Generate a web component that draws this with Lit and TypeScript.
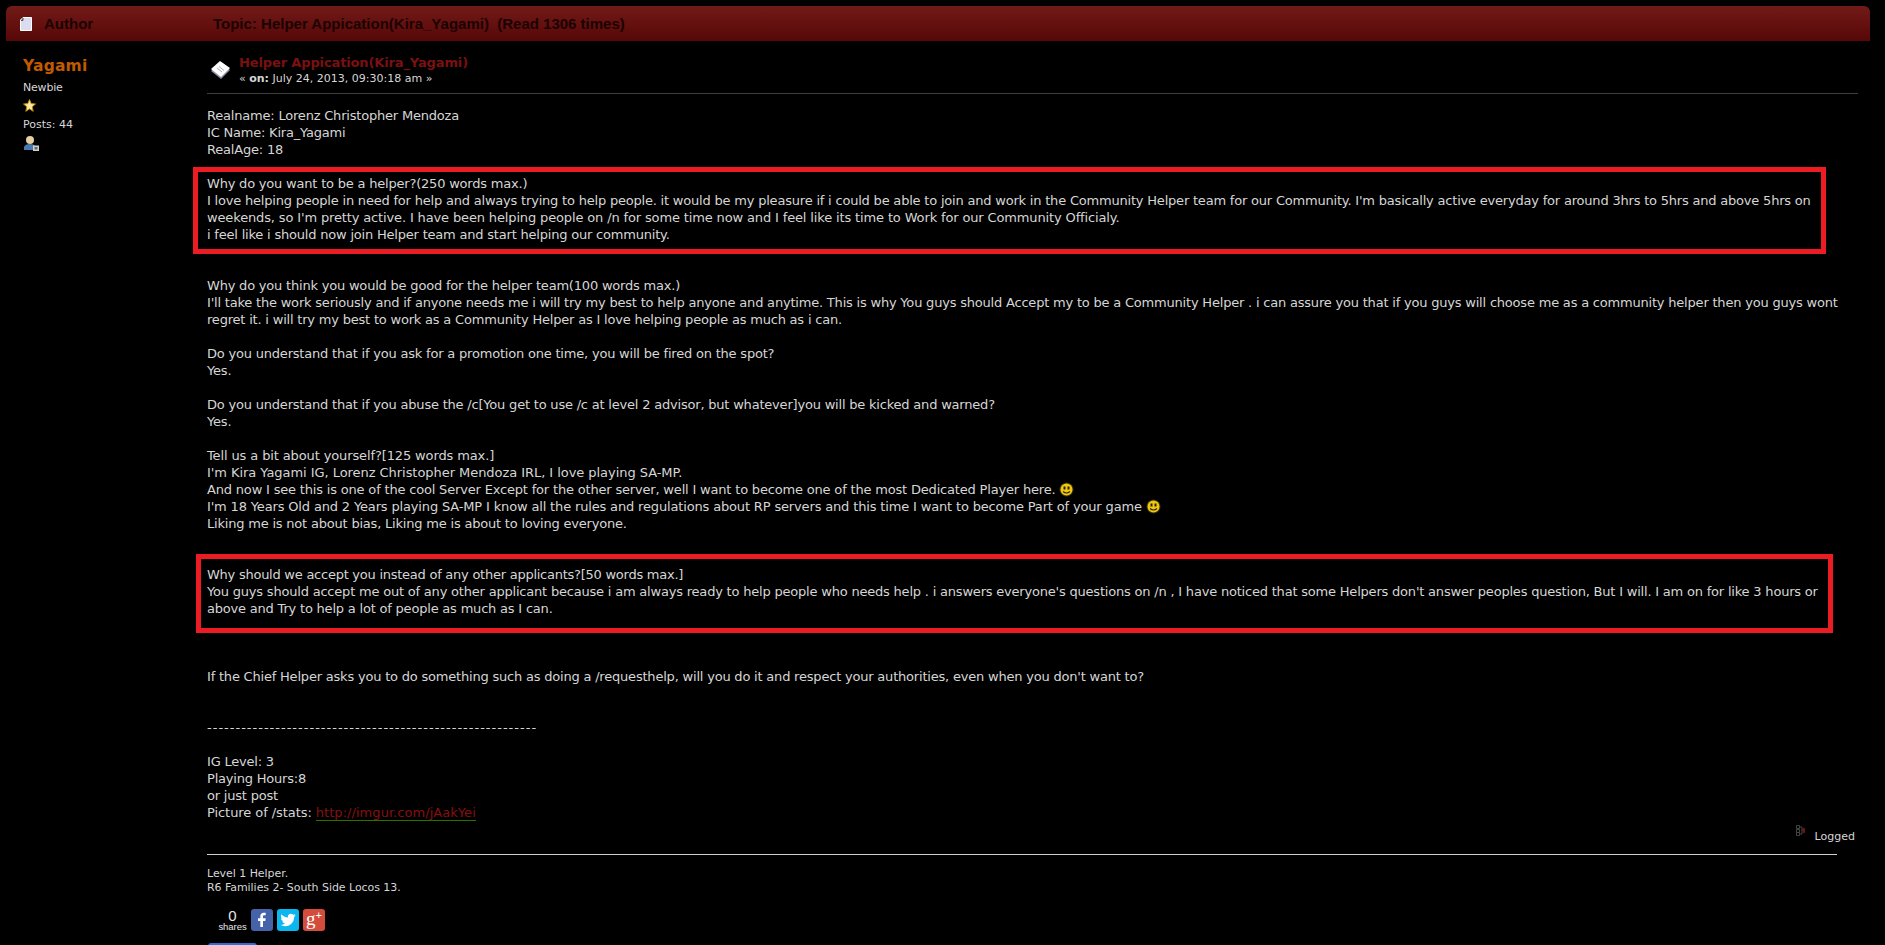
import { LitElement, html, css } from "lit";
import { customElement } from "lit/decorators.js";

const smiley = html`<svg class="smiley" width="15" height="15" viewBox="0 0 15 15">
  <circle cx="7.5" cy="7.5" r="7" fill="#3a3208"/>
  <circle cx="7.5" cy="7.5" r="6" fill="#f3c80c"/>
  <rect x="4.5" y="4.500" width="2" height="3" fill="#222"/>
  <rect x="8.500" y="4.500" width="2" height="3" fill="#222"/>
  <path d="M4 9.500 Q7.500 12.500 11 9.500" stroke="#222" stroke-width="1.100" fill="none"/>
</svg>`;

@customElement("app-root")
export class AppRoot extends LitElement {
  static styles = css`
    :host {
      display: block;
      height: 945px;
      overflow: hidden;
      position: relative;
      background: #000;
      color: #d6d6d6;
      font-family: "DejaVu Sans", Verdana, sans-serif;
      font-size: 13px;
    }
    .bar {
      margin: 6px 15px 0 6px;
      height: 35px;
      border-radius: 6px 6px 0 0;
      background: linear-gradient(#721b18, #570707);
      display: flex;
      align-items: center;
      color: #1c0303;
      font: bold 15px "Liberation Sans", Arial, sans-serif;
      box-sizing: border-box;
    }
    .bar svg { margin-left: 14px; flex: none; }
    .author { margin-left: 12px; width: 169px; }
    .post { display: flex; padding-left: 23px; }
    .poster {
      width: 184px;
      flex: none;
      padding-top: 15px;
      font-size: 11px;
      line-height: 14px;
    }
    .name { color: #c25a00; font-size: 15.5px; font-weight: bold; line-height: 20px; margin-bottom: 4px; letter-spacing: 0.2px; }
    .poster .row { height: 15px; line-height: 15px; }
    .rank { letter-spacing: -0.2px; }
    .poster svg { display: block; }
    .star { margin: 4px 0 5px; }
    .usr { margin: 4px 0 0 1px; }
    .content { width: 1651px; flex: none; }
    .head {
      height: 53px;
      box-sizing: border-box;
      border-bottom: 1px solid #3e3e3e;
      display: flex;
      gap: 8px;
      padding: 13px 0 0 3px;
    }
    .head svg { margin-top: 7px; flex: none; }
    .title { color: #7b1010; font-weight: bold; font-size: 13px; line-height: 17px; letter-spacing: -0.13px; }
    .on { font-size: 11px; line-height: 16px; color: #d6d6d6; }
    .body {
      margin-top: 13px;
      line-height: 17px;
      white-space: nowrap;
      height: 747px;
      letter-spacing: -0.2px;
    }
    .dashes { letter-spacing: 1px; }
    .s05 { letter-spacing: -0.05px; }
    .s07 { letter-spacing: -0.07px; }
    .s12 { letter-spacing: -0.12px; }
    .s14 { letter-spacing: -0.14px; }
    .s15 { letter-spacing: -0.155px; }
    .s18 { letter-spacing: -0.18px; }
    .s25 { letter-spacing: -0.25px; }
    .body a { color: #86100f; text-decoration: none; border-bottom: 1px solid #2d7000; letter-spacing: 0.05px; }
    .smiley { vertical-align: -3px; }
    .logged { height: 0; position: relative; }
    .logged-in {
      position: absolute;
      right: 3px;
      top: -24px;
      display: flex;
      gap: 9px;
      font-size: 11px;
      line-height: 14px;
    }
    .logged-in svg { margin-top: -5px; }
    .sig {
      border-top: 1px solid #d0d0d0;
      width: 1630px;
      padding-top: 12px;
      font-size: 11px;
      line-height: 14px;
      letter-spacing: -0.05px;
    }
    .share { display: flex; gap: 4px; margin: 14px 0 0 11px; align-items: flex-start; }
    .count { width: 29px; text-align: center; font: 9.5px/8px "Liberation Sans", Arial, sans-serif; color: #e6e6e6; box-sizing: border-box; }
    .count b { display: block; font: 15px/14px "Liberation Sans", Arial, sans-serif; }
    .btn { width: 22px; height: 22px; border-radius: 3px; display: block; }
    .fb { background: #4463a8; }
    .tw { background: #0cb6ee; }
    .gp { background: #d44c3c; color: #fff; font: 19px/19px "Liberation Serif", serif; text-align: center; letter-spacing: 0; }
    .gp span { font: 11px/1px "Liberation Sans", sans-serif; vertical-align: 6px; }
    .more {
      width: 49px;
      height: 10px;
      background: #2d6ed2;
      border-radius: 3px 3px 0 0;
      margin: 12px 0 0 1px;
    }
    .mark {
      position: absolute;
      border: 5px solid #ed1c24;
      box-sizing: border-box;
      pointer-events: none;
    }
    .m1 { left: 193px; top: 167px; width: 1633px; height: 87px; }
    .m2 { left: 196px; top: 554px; width: 1637px; height: 79px; }
  `;

  render() {
    return html`
      <div class="bar">
        <svg width="12" height="14" viewBox="0 0 12 14">
          <path d="M3 .5H11.500V13.500H.5V3Z" fill="#dcdcf0" stroke="#fff"/>
          <path d="M3 1V3.500H1" fill="#777" stroke="#555"/>
        </svg>
        <span class="author">Author</span>
        <span>Topic: Helper Appication(Kira_Yagami) &nbsp;(Read 1306 times)</span>
      </div>
      <div class="post">
        <div class="poster">
          <div class="name">Yagami</div>
          <div class="row rank">Newbie</div>
          <svg class="star" width="13" height="13" viewBox="0 0 13 13">
            <path d="M6.500 .5 8.200 4.600 12.500 5 9.200 7.800 10.200 12.300 6.500 9.900 2.800 12.300 3.800 7.800.5 5 4.800 4.600Z" fill="#ffe9a0" stroke="#b8860b"/>
          </svg>
          <div class="row">Posts: 44</div>
          <svg class="usr" width="15" height="15" viewBox="0 0 15 15">
            <circle cx="6" cy="4" r="4" fill="#e6cfa0"/>
            <path d="M0 14V11Q1 8 6 8 10 8 11 10V14Z" fill="#4a7ab0"/>
            <rect x="9" y="9.500" width="6" height="5.500" fill="#d0d0d0"/>
            <rect x="10.500" y="11" width="3" height="2.500" fill="#666"/>
          </svg>
        </div>
        <div class="content">
          <div class="head">
            <svg width="21" height="19" viewBox="0 0 21 19">
              <path d="M10 2 20 9 11 18 1 10Z" fill="#8e8ea8"/>
              <path d="M10 0 20 7 11 16 1 8Z" fill="#fff"/>
              <path d="M7 7 12 11M9 5.500 14 9.500" stroke="#aaa"/>
            </svg>
            <div>
              <div class="title">Helper Appication(Kira_Yagami)</div>
              <div class="on">« <b>on:</b> July 24, 2013, 09:30:18 am »</div>
            </div>
          </div>
          <div class="body">
            Realname: Lorenz Christopher Mendoza<br>
            IC Name: Kira_Yagami<br>
            RealAge: 18<br><br>
            Why do you want to be a helper?(250 words max.)<br>
            I love helping people in need for help and always trying to help people. it would be my pleasure if i could be able to join and work in the Community Helper team for our Community. I'm basically active everyday for around 3hrs to 5hrs and above 5hrs on<br>
            <span class="s14">weekends, so I'm pretty active. I have been helping people on /n for some time now and I feel like its time to Work for our Community Officialy.</span><br>
            i feel like i should now join Helper team and start helping our community.<br><br><br>
            Why do you think you would be good for the helper team(100 words max.)<br>
            I'll take the work seriously and if anyone needs me i will try my best to help anyone and anytime. This is why You guys should Accept my to be a Community Helper . i can assure you that if you guys will choose me as a community helper then you guys wont<br>
            regret it. i will try my best to work as a Community Helper as I love helping people as much as i can.<br><br>
            Do you understand that if you ask for a promotion one time, you will be fired on the spot?<br>
            Yes.<br><br>
            Do you understand that if you abuse the /c[You get to use /c at level 2 advisor, but whatever]you will be kicked and warned?<br>
            Yes.<br><br>
            <span class="s12">Tell us a bit about yourself?[125 words max.]</span><br>
            <span class="s05">I'm Kira Yagami IG, Lorenz Christopher Mendoza IRL, I love playing SA-MP.</span><br>
            <span class="s18">And now I see this is one of the cool Server Except for the other server, well I want to become one of the most Dedicated Player here. ${smiley}</span><br>
            <span class="s15">I'm 18 Years Old and 2 Years playing SA-MP I know all the rules and regulations about RP servers and this time I want to become Part of your game ${smiley}</span><br>
            Liking me is not about bias, Liking me is about to loving everyone.<br><br><br>
            <span class="s25">Why should we accept you instead of any other applicants?[50 words max.]</span><br>
            You guys should accept me out of any other applicant because i am always ready to help people who needs help . i answers everyone's questions on /n , I have noticed that some Helpers don't answer peoples question, But I will. I am on for like 3 hours or<br>
            above and Try to help a lot of people as much as I can.<br><br><br><br>
            If the Chief Helper asks you to do something such as doing a /requesthelp, will you do it and respect your authorities, even when you don't want to?<br><br><br>
            <span class="dashes">----------------------------------------------------------</span><br><br>
            IG Level: 3<br>
            Playing Hours:8<br>
            or just post<br>
            <span class="s07">Picture of /stats: </span><a>http://imgur.com/jAakYei</a>
          </div>
          <div class="logged">
            <div class="logged-in">
              <svg width="10" height="11" viewBox="0 0 10 11">
                <path d="M.5.5H3.500V3.500H.5ZM.5 4.500H3.500V7.500H.5ZM.5 7.500H3.500V10.500H.5ZM3.500 2H6V9H3.500M6 5H7.500" fill="none" stroke="#444"/>
                <rect x="7.500" y="3" width="1" height="5" fill="#e02000"/>
              </svg>
              <span>Logged</span>
            </div>
          </div>
          <div class="sig">
            Level 1 Helper.<br>
            R6 Families 2- South Side Locos 13.
            <div class="share">
              <div class="count"><b>0</b>shares</div>
              <span class="btn fb"><svg width="22" height="22" viewBox="0 0 22 22"><path d="M12 18V12H14.300L14.700 9.200H12V7.600C12 6.800 12.300 6.300 13.300 6.300H14.700V3.800C14.300 3.700 13.500 3.700 12.700 3.700 10.700 3.700 9.300 4.900 9.300 7.200V9.200H7V12H9.300V18Z" fill="#fff"/></svg></span>
              <span class="btn tw"><svg width="22" height="22" viewBox="0 0 24 24"><path transform="translate(3.600 3.600) scale(.7)" d="M23.950 4.570a10 10 0 0 1-2.820.77 4.960 4.960 0 0 0 2.160-2.720c-.95.550-2 .96-3.130 1.190a4.920 4.920 0 0 0-8.380 4.480C7.690 8.100 4.070 6.130 1.640 3.160a4.820 4.820 0 0 0-.66 2.470c0 1.710.87 3.210 2.190 4.100a4.900 4.900 0 0 1-2.230-.61v.06a4.920 4.920 0 0 0 3.950 4.830 5 5 0 0 1-2.210.08 4.940 4.940 0 0 0 4.600 3.420A9.870 9.870 0 0 1 0 19.540a13.940 13.940 0 0 0 7.550 2.210c9.050 0 14-7.500 14-13.980 0-.21 0-.42-.02-.63a9.940 9.940 0 0 0 2.460-2.550z" fill="#fff"/></svg></span>
              <span class="btn gp">g<span>+</span></span>
            </div>
            <div class="more"></div>
          </div>
        </div>
      </div>
      <div class="mark m1"></div>
      <div class="mark m2"></div>
    `;
  }
}
